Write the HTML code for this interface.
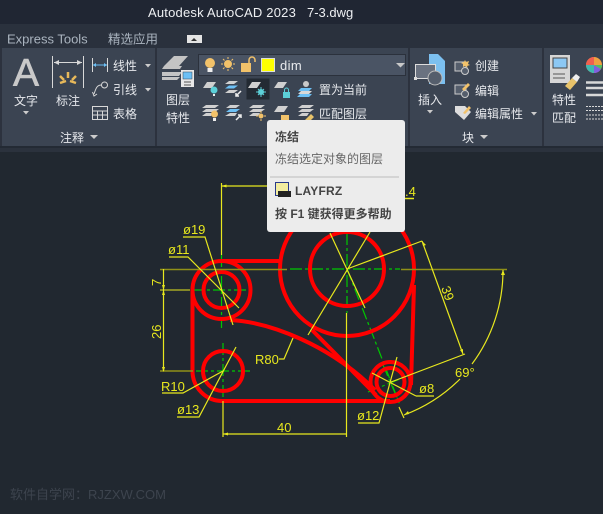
<!DOCTYPE html>
<html><head><meta charset="utf-8"><style>
html,body{margin:0;padding:0;background:#212830}
svg{display:block}
text{font-family:"Liberation Sans","Noto Sans CJK SC",sans-serif}
.w{fill:#e6e8ec;font-size:12px}
.c{text-anchor:middle}
.y{fill:#e8e81e;font-size:13px}
</style></head><body>
<svg width="603" height="514" viewBox="0 0 603 514" xmlns="http://www.w3.org/2000/svg">
<rect width="603" height="514" fill="#212830"/>
<rect width="603" height="24" fill="#202633"/>
<rect y="24" width="603" height="24" fill="#2a313d"/>
<rect y="48" width="603" height="98" fill="#3b4452"/>
<rect y="146" width="603" height="2" fill="#232a34"/>
<rect y="148" width="603" height="4" fill="#2b323d"/>
<path d="M1 48V146M156 48V146M409 48V146M543 48V146" stroke="#272d38" stroke-width="1.5"/>
<text x="148" y="17" fill="#eef0f3" font-size="13" letter-spacing=".2">Autodesk AutoCAD 2023</text>
<text x="307" y="17" fill="#eef0f3" font-size="13">7-3.dwg</text>
<text x="7" y="43.500" fill="#aab4bf" font-size="13">Express Tools</text>
<text x="108" y="43.500" fill="#aab4bf" font-size="12.500">精选应用</text>
<rect x="187" y="35" width="15" height="8" fill="#e4e4e4"/><path d="M191 41h6l-3-3z" fill="#333"/>

<!-- annotate -->
<text x="26" y="86" class="c" fill="#c9c9c9" stroke="#c9c9c9" stroke-width=".6" font-size="39">A</text>
<text x="26" y="105" class="w c">文字</text><path d="M23 111h6l-3 3.500z" fill="#ccc"/>
<g stroke="#d8d8d8" fill="none"><path d="M52.500 56V88M83.500 56V88M54 62.500H82"/></g>
<path d="M54 62.500l5-2.500v5zM82 62.500l-5-2.500v5z" fill="#d8d8d8"/>
<path d="M68 72v6M60 76l4 4M76 76l-4 4M60 83l6-2M76 83l-6-2" stroke="#e8b95a" stroke-width="2.500"/>
<text x="68" y="105" class="w c">标注</text>
<path d="M92.500 58V72M107.500 58V72" stroke="#d8d8d8" fill="none"/><path d="M93 65H107" stroke="#6cc0f5"/><path d="M93 65l3-2v4zM107 65l-3-2v4z" fill="#6cc0f5"/>
<text x="113" y="70" class="w">线性</text><path d="M145 64h6l-3 3.500z" fill="#ccc"/>
<circle cx="104.500" cy="85" r="3" fill="none" stroke="#d8d8d8"/><path d="M101.500 85C97 85 96 88 94 94M92.500 92l1.500 4 3-2" fill="none" stroke="#d8d8d8"/>
<text x="113" y="94" class="w">引线</text><path d="M145 88h6l-3 3.500z" fill="#ccc"/>
<path d="M92.500 106.500h15v13h-15zM92.500 111h15M92.500 115h15M97.500 111v8.500M102.500 111v8.500" fill="none" stroke="#d8d8d8"/>
<text x="113" y="118" class="w">表格</text>
<text x="72" y="142" class="w c">注释</text><path d="M90 135h8l-4 4z" fill="#ccc"/>

<!-- layers -->
<path d="M174 56h14l-9 10h-15zM164 66l-2 3h18l2-3zM162 72h20l-3 4h-17zM162 77h18l-3 3h-15z" fill="#c4c4c4"/>
<rect x="181" y="70" width="13" height="17" fill="#e8e8e8"/><rect x="183" y="72" width="9" height="7" fill="#6cc0f5" stroke="#345" stroke-width=".5"/><path d="M184 82h7M184 85h7" stroke="#555"/>
<text x="178" y="104" class="w c">图层</text><text x="178" y="122" class="w c">特性</text>
<rect x="198.500" y="54.500" width="207" height="21" fill="#4a5464" stroke="#2b313c"/>
<circle cx="210" cy="63" r="5" fill="#f2c26a"/><rect x="207.500" y="68" width="5" height="4" fill="#eee"/>
<circle cx="228" cy="64" r="4" fill="#f2c26a"/><path d="M228 57v2M228 69v2M221 64h2M233 64h2M223 59l1.500 1.500M233 59l-1.500 1.500M223 69l1.500-1.500M233 69l-1.500-1.500" stroke="#f2c26a"/>
<rect x="241" y="63" width="10" height="9" fill="#f2c26a"/><path d="M249 63v-3a3 3 0 0 1 6 0v2" fill="none" stroke="#f2c26a" stroke-width="1.500"/>
<rect x="261.500" y="58.500" width="13" height="13" fill="#ffff00" stroke="#ddd"/>
<text x="280" y="70" fill="#e8eaee" font-size="13" letter-spacing=".4">dim</text>
<path d="M396 63h9l-4.500 4.500z" fill="#c9c9c9"/>
<rect x="246.500" y="78.500" width="23" height="21" fill="#232a33"/>
<g fill="#d0d0d0">
<path d="M207 82h9l-4 6h-9zM252 82h9l-4 6h-9zM278 82h9l-4 6h-9z"/>
<path d="M229 81h9l-4 3h-9zM229 90h9l-4 3h-9z"/>
<path d="M206 105h13l-4 3h-13zM206 109h13l-4 3h-13zM206 113h7l-2 3h-9z"/>
<path d="M230 105h10l-4 3h-10zM230 113h7l-2 3h-10z"/>
<path d="M253 105h12l-4 3h-12zM253 109h12l-4 3h-12zM253 113h7l-2 3h-9z"/>
<path d="M278 106h10l-4 6h-10z"/>
<path d="M302 105h12l-4 3h-12zM302 109h12l-4 3h-12zM302 113h7l-2 3h-9z"/>
</g>
<path d="M229 85.500h9l-4 3h-9z" fill="#6cc0f5"/><path d="M230 109h10l-4 3h-10z" fill="#6cc0f5"/>
<path d="M241 91l-5 5M236 93v3h3" stroke="#eee" fill="none" stroke-width="1.500"/><path d="M236 120l5-5M238 115h3v3" stroke="#eee" fill="none" stroke-width="1.500"/>
<circle cx="214" cy="90" r="3.500" fill="#5cd0d8"/><rect x="213" y="94" width="2" height="2" fill="#eee"/>
<circle cx="261" cy="92" r="3" fill="#5cd0d8"/><path d="M256 92h10M261 87v10M258 89l6 6M264 89l-6 6" stroke="#5cd0d8"/>
<rect x="283" y="92" width="7" height="6" fill="#5cd0d8"/><path d="M284.500 92v-2a2 2 0 0 1 4 0v2" fill="none" stroke="#5cd0d8"/>
<circle cx="214.500" cy="114" r="3.500" fill="#f2c26a"/><rect x="213" y="118" width="3" height="3" fill="#eee"/>
<circle cx="261" cy="116" r="2.500" fill="#f2c26a"/><path d="M261 111v2M261 119v2M256 116h2M264 116h2" stroke="#f2c26a"/>
<rect x="281" y="115" width="8" height="5" fill="#f2c26a"/>
<path d="M305 120l6-6 3 3-3 3z" fill="#e8c36a"/>
<circle cx="306" cy="84" r="3" fill="#c9c9c9"/><path d="M301 88h11l-3 3h-11zM300 94h12l-3 3h-12z" fill="#6cc0f5"/><path d="M301 91h11l-3 3h-11z" fill="#d8d8d8"/>
<text x="319" y="94" class="w">置为当前</text><text x="319" y="118" class="w">匹配图层</text>
<text x="266" y="142" class="w">图层</text>

<!-- block -->
<path d="M429 54h9l7 7v23h-16z" fill="#7cc0f0"/><path d="M415.500 64.500h20v14h-20z" fill="#6a7280" stroke="#ddd"/><circle cx="435" cy="78" r="7" fill="#555e6c" stroke="#bbb"/><rect x="414" y="77" width="3" height="3" fill="#ddd"/>
<text x="430" y="104" class="w c">插入</text><path d="M427 110h6l-3 3.500z" fill="#ccc"/>
<path d="M455 62h11v9h-11z" fill="#555e6c" stroke="#ccc"/><circle cx="465" cy="71" r="3.500" fill="#555e6c" stroke="#ccc"/><path d="M465 60l1 2 3-1-1 3 2 1-3 1 1 2-3-2-2 1 0-3-2-1 3-1z" fill="#f2c26a"/>
<path d="M455 85h11v9h-11z" fill="#555e6c" stroke="#ccc"/><circle cx="465" cy="94" r="3.500" fill="#555e6c" stroke="#ccc"/><path d="M462 89l6-6 2 2-6 6z" fill="#f2c26a"/>
<path d="M455 106h10l6 6-7 8-9-8z" fill="#ddd"/><path d="M463 113l6-7 2 2-6 6z" fill="#f2c26a"/>
<text x="475" y="70" class="w">创建</text><text x="475" y="95" class="w">编辑</text><text x="475" y="118" class="w">编辑属性</text>
<path d="M531 112h6l-3 3.500z" fill="#ccc"/>
<text x="468" y="142" class="w c">块</text><path d="M480 135h8l-4 4z" fill="#ccc"/>

<!-- match -->
<rect x="550" y="55" width="20" height="28" fill="#d6d6d6"/><rect x="553" y="58" width="14" height="10" fill="#8cc8f4" stroke="#444"/><path d="M553 74h12M553 78h12" stroke="#555"/>
<path d="M565 86l7-8 5 4-7 8z" fill="#e8c36a"/><path d="M572 78l4-4 4 3-3 5z" fill="#eee"/>
<text x="564" y="104" class="w c">特性</text><text x="564" y="122" class="w c">匹配</text>
<circle cx="594" cy="65" r="8" fill="#f0a040"/><path d="M594 65V57A8 8 0 0 0 586 65z" fill="#f06050"/><path d="M594 65H586A8 8 0 0 0 594 73z" fill="#40b8b0"/><path d="M594 65v8a8 8 0 0 0 7-4z" fill="#8060e0"/><path d="M594 65l7 4a8 8 0 0 0 1-4z" fill="#50c060"/>
<path d="M586 82.500h17M586 88h17M586 95h17" stroke="#d8d8d8" stroke-width="2.500"/>
<path d="M586 106.500h17M586 110.500h17M586 115h17M586 119h17" stroke="#d8d8d8" stroke-dasharray="2 1"/>

<!-- drawing -->
<g fill="none" stroke="#00c800" stroke-width="1.200" stroke-dasharray="12 3 3 3">
<path d="M290 269H400"/><path d="M347 233V313"/>
<path d="M192 290H253"/><path d="M221.500 255V328"/>
<path d="M196 371H250"/><path d="M223 343V398"/>
<path d="M347 269L400 405"/><path d="M368 392L410 375"/><path d="M383 365L398 400"/>
</g>
<g fill="none" stroke="#f00" stroke-width="4">
<circle cx="221.500" cy="290" r="18"/><circle cx="221.500" cy="290" r="29"/>
<circle cx="223" cy="371" r="20"/>
<circle cx="347" cy="269" r="37"/><circle cx="347" cy="269" r="67"/>
<circle cx="390.500" cy="382" r="14"/><circle cx="390.500" cy="382" r="20"/>
<path d="M192.500 290V371A30 30 0 0 0 223 401H390"/>
<path d="M221 261H282"/>
<path d="M230 320C270 322 330 345 375 390"/>
<path d="M312 330L376 395"/>
<path d="M411 385L414 285"/>
</g>
<g fill="none" stroke="#909018" stroke-width="1.500">
<path d="M160 269.500H287M401 269.500H507"/><path d="M160 371H193"/>
</g>
<path d="M160 290H190" stroke="#e8e81e" fill="none"/>
<g fill="none" stroke="#e8e81e" stroke-width="1.200">
<path d="M221.500 183V255M221 186H270"/>
<path d="M405 198.500H414" stroke-width="1.500"/>
<path d="M163.500 269V371"/>
<path d="M183 237H205L233 325"/><path d="M169 257H188L239 308"/>
<path d="M279 359H284L293 338"/>
<path d="M162 393H183L223 371"/><path d="M177 417H199L236 347"/>
<path d="M223 401V437M223 434H347"/><path d="M346.500 313V437"/>
<path d="M330 233L365 308M370 232L308 335M347 269L422 241"/>
<path d="M422 241L463 354M465 354L391 382"/>
<path d="M503 270A157 157 0 0 1 472 364M460 379A157 157 0 0 1 404 415M399 407L404 418"/>
<path d="M416 396H434M416 396L372 373" /><path d="M358 423H379L397 357"/>
</g>
<g fill="#e8e81e">
<path d="M163.500 372l-1.500-5h3z"/><path d="M163.500 290l-1.500-5h3zM163.500 290l-1.500 5h3z"/>
<path d="M223 434l5-1.500v3z"/><path d="M221.500 186l5-1.500v3z"/><path d="M422 241l1 5 3-1z"/><path d="M463 354l-3-4 3-1z"/><path d="M503 270l-2 5 4 0z"/><path d="M404 415l5-1-1-3z"/>
</g>
<g fill="#e8e81e" font-size="13">
<text x="183" y="234" class="y">ø19</text><text x="168" y="254" class="y">ø11</text>
<text x="255" y="364" class="y">R80</text><text x="161" y="391" class="y">R10</text>
<text x="177" y="414" class="y">ø13</text><text x="277" y="432" class="y">40</text>
<text x="405" y="196" class="y">.4</text>
<text x="419" y="393" class="y">ø8</text><text x="357" y="420" class="y">ø12</text>
<text x="455" y="377" class="y">69°</text>
<text transform="translate(161,286) rotate(-90)" class="y">7</text>
<text transform="translate(161,339) rotate(-90)" class="y">26</text>
<text transform="translate(441,288) rotate(70)" class="y">39</text>
</g>
<text x="10" y="499" fill="#3d444e" font-size="13">软件自学网：RJZXW.COM</text>

<!-- tooltip -->
<rect x="267" y="120" width="138" height="112" rx="3" fill="#ececec"/>
<text x="275" y="141" fill="#444" font-size="12" font-weight="bold">冻结</text>
<text x="275" y="163" fill="#666" font-size="12">冻结选定对象的图层</text>
<rect x="270" y="176.500" width="129" height="1" fill="#bbb"/>
<rect x="275.500" y="182.500" width="13" height="13" fill="#f3eda0" stroke="#2a3a8a"/>
<rect x="278" y="191" width="13" height="6" fill="#222"/>
<text x="295" y="195" fill="#444" font-size="12" font-weight="bold" letter-spacing=".2">LAYFRZ</text>
<text x="275" y="218" fill="#444" font-size="12" font-weight="bold">按 F1 键获得更多帮助</text>
</svg>
</body></html>
